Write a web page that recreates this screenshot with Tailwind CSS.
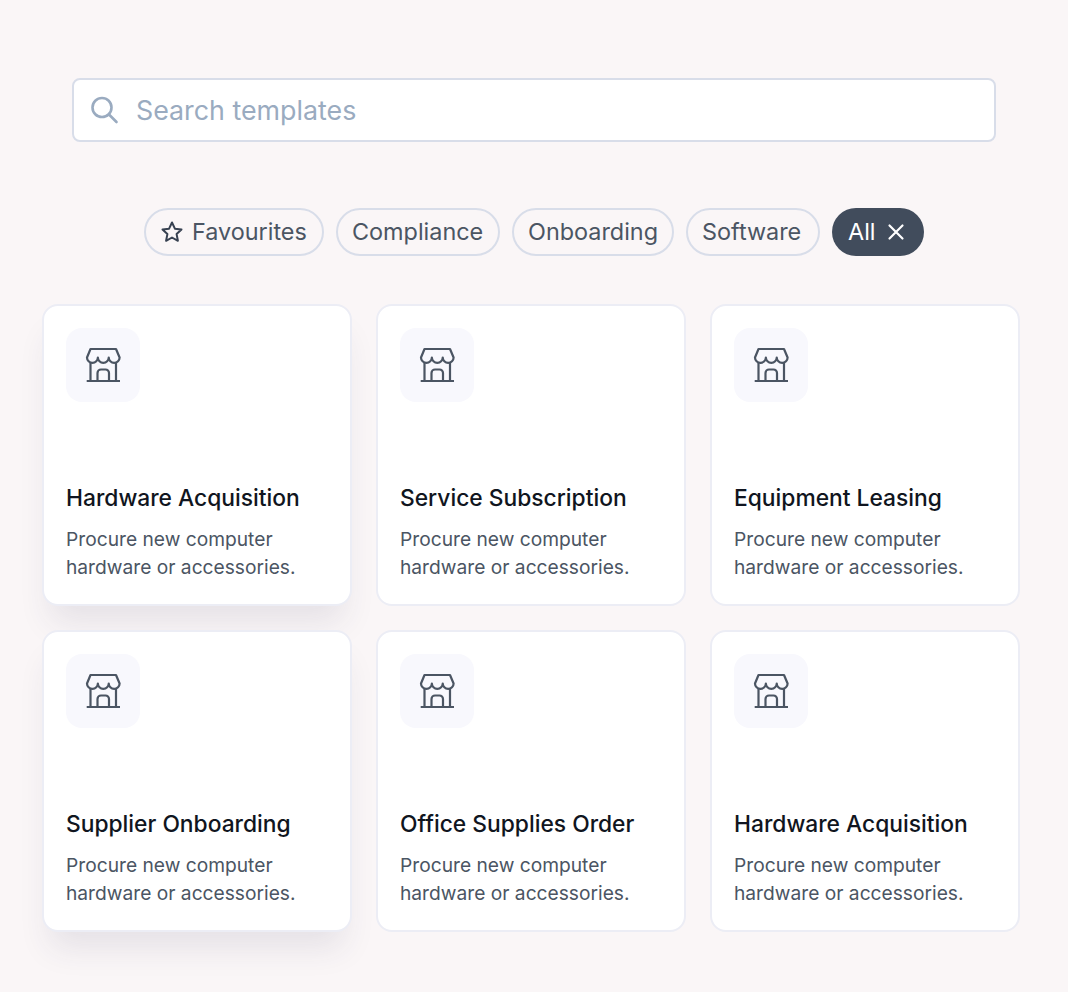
<!doctype html>
<html><head><meta charset="utf-8"><script src="https://cdn.jsdelivr.net/npm/@tailwindcss/browser@4"></script></head>
<body class="bg-[#faf6f7]">
<div class="w-[1068px] h-[992px] overflow-hidden bg-[#faf6f7] font-['Inter',sans-serif] pt-[78px]">
  <div class="mx-[72px] h-[64px] bg-white border-2 border-[#d8dde9] rounded-lg flex items-center pl-[14px] gap-4">
    <svg width="32" height="32" viewBox="0 0 32 32" fill="none" stroke="#9aabc0" stroke-width="2.6" stroke-linecap="round"><circle cx="14" cy="13.500" r="9.500"/><path d="M21 20.500L28.500 28"/></svg>
    <span class="text-[26.800px] text-[#9aabc0]">Search templates</span>
  </div>
  <div class="mt-[66px] flex justify-center gap-3 h-[48px]">
    <div class="w-[180px] flex items-center gap-2 pl-[14px] rounded-full border-2 border-[#d8dde9] text-[23.400px] text-[#4b5563]">
      <svg width="24" height="24" viewBox="0 0 24 24" fill="none" stroke="#374151" stroke-width="2" stroke-linejoin="round"><path d="M12 2.500l2.900 6.200 6.600.8-4.900 4.600 1.300 6.700-5.900-3.300-5.900 3.300 1.300-6.700-4.900-4.600 6.600-.8z"/></svg>
      Favourites</div>
    <div class="w-[164px] flex items-center pl-[14px] rounded-full border-2 border-[#d8dde9] text-[23.400px] text-[#4b5563]">Compliance</div>
    <div class="w-[162px] flex items-center pl-[14px] rounded-full border-2 border-[#d8dde9] text-[23.400px] text-[#4b5563]">Onboarding</div>
    <div class="w-[134px] flex items-center pl-[14px] rounded-full border-2 border-[#d8dde9] text-[23.400px] text-[#4b5563]">Software</div>
    <div class="w-[92px] flex items-center justify-between pl-4 pr-[19px] rounded-full bg-[#414c5c] text-[23.400px] text-white">All
      <svg width="18" height="18" viewBox="0 0 18 18" fill="none" stroke="#fff" stroke-width="2.200" stroke-linecap="round"><path d="M2.500 2.500l13 13M15.500 2.500l-13 13"/></svg>
    </div>
  </div>
  <div class="mt-[48px] mx-[42px] grid grid-cols-[310px_310px_310px] gap-6">

    <div class="h-[302px] bg-white rounded-2xl border-2 border-[#ecedf5] shadow-[0_24px_32px_-8px_rgba(50,50,90,0.1)] pt-[22px] px-[22px]">
      <div class="w-[74px] h-[74px] rounded-2xl bg-[#f8f8fd] flex items-center justify-center">
        <svg width="36" height="36" viewBox="0 0 36 36" fill="none" stroke="#4b5563" stroke-width="2.2" stroke-linejoin="round"><path d="M2 10.500a5.430 5.430 0 0 0 10.870 0a5.430 5.430 0 0 0 10.870 0a5.430 5.430 0 0 0 10.860 0L31 2H5.500Z"/><path d="M5.500 15.500V34M31 15.500V34M1.700 34H35"/><path d="M12.500 34V26a3.500 3.500 0 0 1 3.500-3.500h4.500a3.500 3.500 0 0 1 3.500 3.500V34"/></svg>
      </div>
      <h3 class="mt-[80px] text-[22.800px] leading-[32px] font-[450] text-[#101520]">Hardware Acquisition</h3>
      <p class="mt-[11px] text-[19.200px] leading-[28px] text-[#4b5563]">Procure new computer<br>hardware or accessories.</p>
    </div>

    <div class="h-[302px] bg-white rounded-2xl border-2 border-[#ecedf5] pt-[22px] px-[22px]">
      <div class="w-[74px] h-[74px] rounded-2xl bg-[#f8f8fd] flex items-center justify-center">
        <svg width="36" height="36" viewBox="0 0 36 36" fill="none" stroke="#4b5563" stroke-width="2.2" stroke-linejoin="round"><path d="M2 10.500a5.430 5.430 0 0 0 10.870 0a5.430 5.430 0 0 0 10.870 0a5.430 5.430 0 0 0 10.860 0L31 2H5.500Z"/><path d="M5.500 15.500V34M31 15.500V34M1.700 34H35"/><path d="M12.500 34V26a3.500 3.500 0 0 1 3.500-3.500h4.500a3.500 3.500 0 0 1 3.500 3.500V34"/></svg>
      </div>
      <h3 class="mt-[80px] text-[22.800px] leading-[32px] font-[450] text-[#101520]">Service Subscription</h3>
      <p class="mt-[11px] text-[19.200px] leading-[28px] text-[#4b5563]">Procure new computer<br>hardware or accessories.</p>
    </div>

    <div class="h-[302px] bg-white rounded-2xl border-2 border-[#ecedf5] pt-[22px] px-[22px]">
      <div class="w-[74px] h-[74px] rounded-2xl bg-[#f8f8fd] flex items-center justify-center">
        <svg width="36" height="36" viewBox="0 0 36 36" fill="none" stroke="#4b5563" stroke-width="2.2" stroke-linejoin="round"><path d="M2 10.500a5.430 5.430 0 0 0 10.870 0a5.430 5.430 0 0 0 10.870 0a5.430 5.430 0 0 0 10.860 0L31 2H5.500Z"/><path d="M5.500 15.500V34M31 15.500V34M1.700 34H35"/><path d="M12.500 34V26a3.500 3.500 0 0 1 3.500-3.500h4.500a3.500 3.500 0 0 1 3.500 3.500V34"/></svg>
      </div>
      <h3 class="mt-[80px] text-[22.800px] leading-[32px] font-[450] text-[#101520]">Equipment Leasing</h3>
      <p class="mt-[11px] text-[19.200px] leading-[28px] text-[#4b5563]">Procure new computer<br>hardware or accessories.</p>
    </div>

    <div class="h-[302px] bg-white rounded-2xl border-2 border-[#ecedf5] shadow-[0_24px_32px_-8px_rgba(50,50,90,0.1)] pt-[22px] px-[22px]">
      <div class="w-[74px] h-[74px] rounded-2xl bg-[#f8f8fd] flex items-center justify-center">
        <svg width="36" height="36" viewBox="0 0 36 36" fill="none" stroke="#4b5563" stroke-width="2.2" stroke-linejoin="round"><path d="M2 10.500a5.430 5.430 0 0 0 10.870 0a5.430 5.430 0 0 0 10.870 0a5.430 5.430 0 0 0 10.860 0L31 2H5.500Z"/><path d="M5.500 15.500V34M31 15.500V34M1.700 34H35"/><path d="M12.500 34V26a3.500 3.500 0 0 1 3.500-3.500h4.500a3.500 3.500 0 0 1 3.500 3.500V34"/></svg>
      </div>
      <h3 class="mt-[80px] text-[22.800px] leading-[32px] font-[450] text-[#101520]">Supplier Onboarding</h3>
      <p class="mt-[11px] text-[19.200px] leading-[28px] text-[#4b5563]">Procure new computer<br>hardware or accessories.</p>
    </div>

    <div class="h-[302px] bg-white rounded-2xl border-2 border-[#ecedf5] pt-[22px] px-[22px]">
      <div class="w-[74px] h-[74px] rounded-2xl bg-[#f8f8fd] flex items-center justify-center">
        <svg width="36" height="36" viewBox="0 0 36 36" fill="none" stroke="#4b5563" stroke-width="2.2" stroke-linejoin="round"><path d="M2 10.500a5.430 5.430 0 0 0 10.870 0a5.430 5.430 0 0 0 10.870 0a5.430 5.430 0 0 0 10.860 0L31 2H5.500Z"/><path d="M5.500 15.500V34M31 15.500V34M1.700 34H35"/><path d="M12.500 34V26a3.500 3.500 0 0 1 3.500-3.500h4.500a3.500 3.500 0 0 1 3.500 3.500V34"/></svg>
      </div>
      <h3 class="mt-[80px] text-[22.800px] leading-[32px] font-[450] text-[#101520]">Office Supplies Order</h3>
      <p class="mt-[11px] text-[19.200px] leading-[28px] text-[#4b5563]">Procure new computer<br>hardware or accessories.</p>
    </div>

    <div class="h-[302px] bg-white rounded-2xl border-2 border-[#ecedf5] pt-[22px] px-[22px]">
      <div class="w-[74px] h-[74px] rounded-2xl bg-[#f8f8fd] flex items-center justify-center">
        <svg width="36" height="36" viewBox="0 0 36 36" fill="none" stroke="#4b5563" stroke-width="2.2" stroke-linejoin="round"><path d="M2 10.500a5.430 5.430 0 0 0 10.870 0a5.430 5.430 0 0 0 10.870 0a5.430 5.430 0 0 0 10.860 0L31 2H5.500Z"/><path d="M5.500 15.500V34M31 15.500V34M1.700 34H35"/><path d="M12.500 34V26a3.500 3.500 0 0 1 3.500-3.500h4.500a3.500 3.500 0 0 1 3.500 3.500V34"/></svg>
      </div>
      <h3 class="mt-[80px] text-[22.800px] leading-[32px] font-[450] text-[#101520]">Hardware Acquisition</h3>
      <p class="mt-[11px] text-[19.200px] leading-[28px] text-[#4b5563]">Procure new computer<br>hardware or accessories.</p>
    </div>

  </div>
</div>
</body></html>
